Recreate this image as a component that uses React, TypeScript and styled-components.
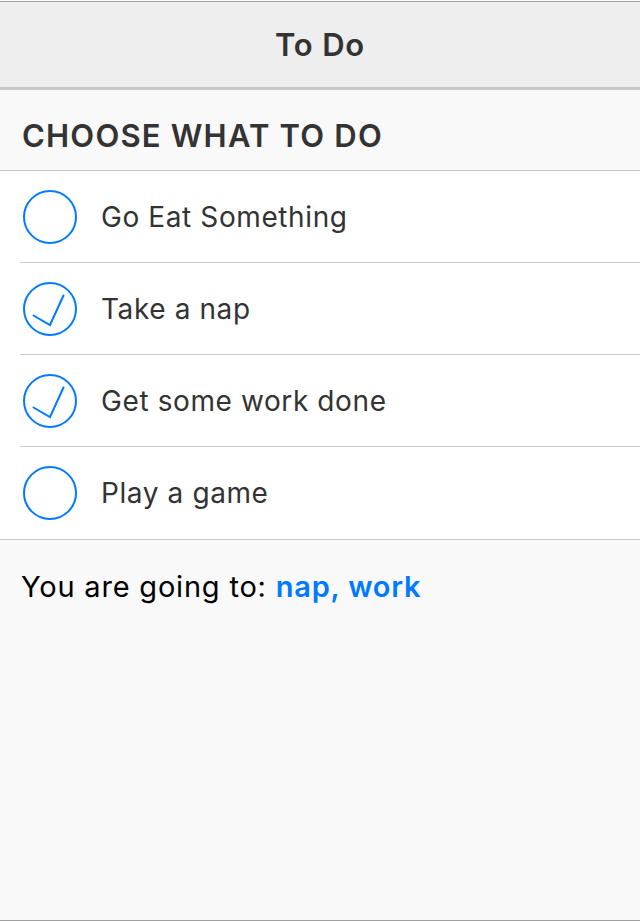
import React from "react";
import styled, { createGlobalStyle } from "styled-components";

const Global = createGlobalStyle`
  html, body {
    margin: 0;
    padding: 0;
    background: #fafafa;
  }
  body {
    padding-top: 1px;
    font-family: Inter, "Noto Sans", "Liberation Sans", sans-serif;
    -webkit-font-smoothing: antialiased;
  }
`;

const Screen = styled.div`
  height: 920px;
  display: flex;
  flex-direction: column;
  border-top: 1px solid #a2a2a2;
  border-bottom: 1px solid #a2a2a2;
  box-sizing: border-box;
  background: #f9f9f9;
`;

const NavBar = styled.header`
  height: 85px;
  flex: none;
  background: #eeeeee;
  border-bottom: 3px solid #c8c8c8;
  display: flex;
  align-items: center;
  justify-content: center;
`;

const NavTitle = styled.h1`
  margin: 0;
  font-size: 31px;
  font-weight: 600;
  color: #333333;
  letter-spacing: 0.8px;
`;

const SectionHeader = styled.div`
  height: 80px;
  flex: none;
  display: flex;
  align-items: center;
  padding: 0 22px;
  border-bottom: 1px solid #c8c8c8;
  background: #f9f9f9;
`;

const SectionTitle = styled.h2`
  margin: 0;
  padding-top: 10px;
  font-size: 31px;
  font-weight: 600;
  color: #333333;
  letter-spacing: 1.2px;
  text-transform: uppercase;
`;

const List = styled.ul`
  margin: 0;
  padding: 0;
  list-style: none;
  background: #ffffff;
  border-bottom: 1px solid #c8c8c8;
`;

const Item = styled.li<{ $last?: boolean }>`
  height: ${(p) => (p.$last ? "92px" : "91px")};
  display: flex;
  align-items: center;
  gap: 23px;
  border-bottom: ${(p) => (p.$last ? "none" : "1px solid #c8c8c8")};
  margin-left: ${(p) => (p.$last ? "0" : "20px")};
  padding-left: ${(p) => (p.$last ? "22px" : "2px")};
`;

const Label = styled.span`
  font-size: 28px;
  color: #333333;
  letter-spacing: 0.6px;
`;

const Footer = styled.div`
  flex: 1;
  padding: 29px 21px 0;
  background: #f9f9f9;
`;

const Summary = styled.p`
  margin: 0;
  font-size: 29px;
  color: #000000;
  letter-spacing: 0.8px;
`;

const Chosen = styled.span`
  color: #007aff;
  font-weight: 600;
`;

const CheckIcon = ({ checked }: { checked: boolean }) => (
  <svg width="56" height="56" viewBox="0 0 56 56" fill="none">
    <circle cx="28" cy="28" r="26" stroke="#007aff" strokeWidth="2" />
    {checked && (
      <polyline
        points="11.5,34.5 28,44 41.5,14.5"
        stroke="#007aff"
        strokeWidth="2"
        strokeLinecap="round"
        strokeLinejoin="miter"
      />
    )}
  </svg>
);

const items = [
  { label: "Go Eat Something", checked: false },
  { label: "Take a nap", checked: true },
  { label: "Get some work done", checked: true },
  { label: "Play a game", checked: false },
];

export default function App() {
  return (
    <>
      <Global />
      <Screen>
        <NavBar>
          <NavTitle>To Do</NavTitle>
        </NavBar>
        <SectionHeader>
          <SectionTitle>Choose what to do</SectionTitle>
        </SectionHeader>
        <List>
          {items.map((it, i) => (
            <Item key={it.label} $last={i === items.length - 1}>
              <CheckIcon checked={it.checked} />
              <Label>{it.label}</Label>
            </Item>
          ))}
        </List>
        <Footer>
          <Summary>
            You are going to: <Chosen>nap, work</Chosen>
          </Summary>
        </Footer>
      </Screen>
    </>
  );
}
